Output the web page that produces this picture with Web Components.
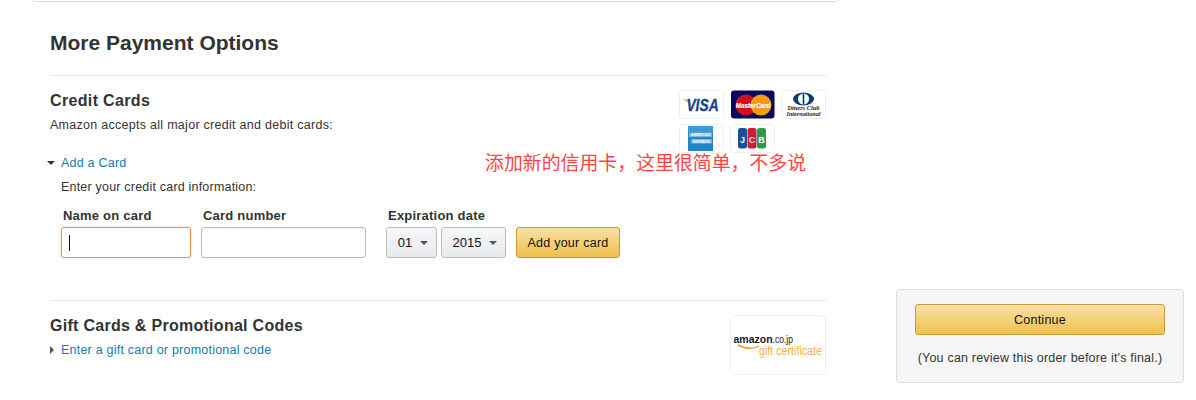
<!DOCTYPE html>
<html>
<head>
<meta charset="utf-8">
<title>More Payment Options</title>
<style>
  html, body { margin: 0; background: #fff; }
  body { font-family: "Liberation Sans", Arial, sans-serif; color: #333; }
</style>
</head>
<body>

<payment-page>
  <payment-options>
    <h-title slot="title">More Payment Options</h-title>

    <pay-section slot="sections" name="Credit Cards" note="Amazon accepts all major credit and debit cards:">
      <card-logos slot="aside"></card-logos>
      <add-card-form></add-card-form>
    </pay-section>

    <pay-section slot="sections" name="Gift Cards &amp; Promotional Codes" compact>
      <gift-logo slot="aside"></gift-logo>
      <toggle-link slot="under">Enter a gift card or promotional code</toggle-link>
    </pay-section>
  </payment-options>

  <order-box>(You can review this order before it's final.)</order-box>
</payment-page>

<script>
function makeEl(name, html) {
  customElements.define(name, class extends HTMLElement {
    constructor() {
      super();
      this.attachShadow({ mode: "open" });
      this.shadowRoot.innerHTML = html;
    }
  });
}

makeEl("payment-page", `
  <style>
    :host { display: flex; width: 1196px; height: 400px; padding-left: 33px; box-sizing: border-box; overflow: hidden; }
  </style>
  <slot></slot>
`);

makeEl("payment-options", `
  <style>
    :host { display: block; width: 805px; flex: none; }
    .stub { height: 1px; border: 1px solid #ddd; border-top: 0; border-radius: 0 0 4px 4px; }
    .body { padding: 0 12px 0 17px; }
    .head { padding-top: 28px; height: 45px; }
  </style>
  <div class="stub"></div>
  <div class="body">
    <div class="head"><slot name="title"></slot></div>
    <slot name="sections"></slot>
  </div>
`);

makeEl("h-title", `
  <style>
    :host { display: block; font: bold 21px/26px "Liberation Sans", Arial, sans-serif; color: #333; }
  </style>
  <slot></slot>
`);

customElements.define("pay-section", class extends HTMLElement {
  constructor() {
    super();
    this.attachShadow({ mode: "open" });
    const note = this.getAttribute("note");
    this.shadowRoot.innerHTML = `
      <style>
        :host { display: block; border-top: 1px solid #e7e7e7; }
        :host([compact]) { margin-top: 42px; }
        .top { display: flex; justify-content: space-between; padding-top: 14px; }
        h3 { margin: 1px 0 0; font: bold 16px/20px "Liberation Sans", Arial, sans-serif; color: #333; letter-spacing: .35px; }
        :host([compact]) h3 { letter-spacing: .28px; }
        p { margin: 6px 0 0; font-size: 12.5px; line-height: 16px; color: #333; letter-spacing: .28px; }
        ::slotted([slot="under"]) { margin-top: 6px; }
      </style>
      <div class="top">
        <div>
          <h3>${this.getAttribute("name")}</h3>
          ${note ? `<p>${note}</p>` : ""}
          <slot name="under"></slot>
        </div>
        <slot name="aside"></slot>
      </div>
      <slot></slot>
    `;
  }
});

makeEl("card-logos", `
  <style>
    :host { display: flex; flex-wrap: wrap; width: 147px; gap: 5px 6px; align-content: flex-start; }
    .c { width: 45px; height: 29px; display: block; }
    text { font-family: "Liberation Sans", Arial, sans-serif; }
    .serif { font-family: "Liberation Serif", serif; }
  </style>
  <svg class="c" viewBox="0 0 45 29">
    <rect x=".5" y=".5" width="44" height="28" rx="3" fill="#fff" stroke="#eee"/>
    <path d="M3 9.5 L9 9.5 L12 15 Q9 11 3 9.5Z" fill="#f0a830"/>
    <text transform="translate(23.5 20.7) scale(1 1.25)" text-anchor="middle" font-size="13.8" font-weight="bold" font-style="italic" fill="#17458f" stroke="#17458f" stroke-width=".3">VISA</text>
  </svg>
  <svg class="c" viewBox="0 0 45 29">
    <rect x="1" y=".5" width="43.5" height="28" rx="3" fill="#05095f"/>
    <circle cx="16" cy="15" r="10.5" fill="#d01020"/>
    <circle cx="31" cy="15" r="10.5" fill="#f59a12"/>
    <text x="23" y="17.5" text-anchor="middle" font-size="6.3" font-weight="bold" font-style="italic" fill="#fff" stroke="#fff" stroke-width=".15">MasterCard</text>
  </svg>
  <svg class="c" viewBox="0 0 45 29">
    <rect x=".5" y=".5" width="44" height="28" rx="3" fill="#fff" stroke="#eee"/>
    <ellipse cx="22.5" cy="9" rx="10.5" ry="6.5" fill="#0a3a78"/>
    <circle cx="22.5" cy="9" r="5.6" fill="#fff"/>
    <rect x="21.7" y="3.4" width="1.6" height="11.2" fill="#0a3a78"/>
    <text class="serif" x="22.5" y="20" text-anchor="middle" font-size="6.4" font-style="italic" font-weight="bold" fill="#222">Diners Club</text>
    <text class="serif" x="22.5" y="26" text-anchor="middle" font-size="6.2" font-style="italic" font-weight="bold" fill="#222">International</text>
  </svg>
  <svg class="c" viewBox="0 0 45 29">
    <rect x=".5" y=".5" width="44" height="28" rx="3" fill="#fff" stroke="#eee"/>
    <rect x="9" y="2" width="25" height="25" fill="#2186c8"/>
    <rect x="9" y="2" width="25" height="6" fill="#3a9ad8"/>
    <rect x="10" y="8.5" width="23" height="4.5" fill="#7db8e0"/>
    <rect x="12" y="15" width="21" height="4.5" fill="#7db8e0"/>
    <text x="21.5" y="12.3" text-anchor="middle" font-size="3.5" font-weight="bold" fill="#fff">AMERICAN</text>
    <text x="22.5" y="18.8" text-anchor="middle" font-size="3.5" font-weight="bold" fill="#fff">EXPRESS</text>
  </svg>
  <svg class="c" viewBox="0 0 45 29">
    <rect x=".5" y=".5" width="44" height="28" rx="3" fill="#fff" stroke="#eee"/>
    <rect x="8" y="4" width="9" height="20.5" rx="2.5" fill="#1a4f9c"/>
    <rect x="17.5" y="4" width="9" height="20.5" rx="2.5" fill="#c8203a"/>
    <rect x="27" y="4" width="9" height="20.5" rx="2.5" fill="#2f9a44"/>
    <text x="12.5" y="18.5" text-anchor="middle" font-size="9" font-weight="bold" fill="#fff">J</text>
    <text x="22" y="18.5" text-anchor="middle" font-size="9" font-weight="bold" fill="#f4d6da">C</text>
    <text x="31.5" y="18.5" text-anchor="middle" font-size="9" font-weight="bold" fill="#fff">B</text>
  </svg>
`);

makeEl("gift-logo", `
  <style>
    :host { display: block; width: 96px; height: 60px; flex: none; }
    svg { display: block; }
    text { font-family: "Liberation Sans", Arial, sans-serif; }
  </style>
  <svg width="96" height="60" viewBox="0 0 96 60">
    <rect x=".5" y=".5" width="95" height="59" rx="5" fill="#fff" stroke="#eee"/>
    <text x="3.5" y="27.5" font-size="10.5" font-weight="bold" fill="#1a1a1a">amazon</text>
    <text transform="translate(42.5 27.5) scale(1 1.3)" font-size="8.6" fill="#1a1a1a">.co.jp</text>
    <path d="M8 30 Q20 36 29 31" fill="none" stroke="#f29a1f" stroke-width="1.4"/>
    <text transform="translate(29 39.5) scale(1 1.15)" font-size="10.7" fill="#fbb040">gift certificate</text>
  </svg>
`);

makeEl("toggle-link", `
  <style>
    :host { display: flex; align-items: center; font-size: 12.5px; line-height: 16px; color: #0f7cb5; letter-spacing: .22px; }
    i { width: 0; height: 0; flex: none; }
    :host(:not([open])) i { border-left: 4px solid #555; border-top: 4px solid transparent; border-bottom: 4px solid transparent; margin-right: 7px; }
    :host([open]) i { border-top: 4px solid #333; border-left: 4px solid transparent; border-right: 4px solid transparent; margin-left: -3px; margin-right: 6px; }
  </style>
  <i></i><slot></slot>
`);

makeEl("text-field", `
  <style>
    :host { display: block; box-sizing: border-box; height: 31px; border: 1px solid #bbb; border-radius: 3px; background: #fff; padding: 7px; box-shadow: inset 0 1px 1px rgba(0,0,0,.05); }
    :host([focused]) { border-color: #e8954a; box-shadow: 0 0 2px rgba(228,121,17,.4); }
    b { display: none; width: 1px; height: 16px; background: #111; }
    :host([focused]) b { display: block; }
  </style>
  <b></b>
`);

makeEl("drop-select", `
  <style>
    :host { display: flex; box-sizing: border-box; height: 31px; padding-left: 2px; align-items: center; justify-content: center; gap: 8px; border: 1px solid #bbb; border-radius: 3px; background: linear-gradient(#f7f8fa, #e7e9ec); font-size: 13px; color: #111; }
    span { margin-left: 1px; }
    i { width: 0; height: 0; border-top: 4px solid #555; border-left: 4px solid transparent; border-right: 4px solid transparent; }
  </style>
  <span><slot></slot></span><i></i>
`);

makeEl("gold-button", `
  <style>
    :host { display: flex; box-sizing: border-box; height: 31px; align-items: center; justify-content: center; border: 1px solid #c59b3a; border-radius: 3px; background: linear-gradient(#f7dfa5, #f0c14b); font-size: 12.5px; color: #111; letter-spacing: .25px; }
  </style>
  <slot></slot>
`);

makeEl("add-card-form", `
  <style>
    :host { display: block; position: relative; }
    toggle-link { margin-top: 2px; }
    .note { margin: 8px 0 0 11px; font-size: 12.5px; line-height: 16px; letter-spacing: .2px; color: #333; }
    .row { display: flex; margin: 13px 0 0 11px; }
    .f { display: flex; flex-direction: column; }
    .f label { font: bold 13px/16px "Liberation Sans", Arial, sans-serif; color: #333; padding-left: 2px; margin-bottom: 3px; letter-spacing: .22px; }
    .pair { display: flex; gap: 4px; }
    .name { width: 130px; margin-right: 10px; }
    .num { width: 165px; margin-right: 20px; }
    .date { margin-right: 10px; }
    .m { width: 51px; }
    .y { width: 65px; }
    .add { width: 104px; }
    .btn { justify-content: flex-end; }
    .memo { position: absolute; left: 435px; top: -5px; font: 18.9px/24px "Noto Sans CJK SC", sans-serif; color: #f44; white-space: nowrap; }
  </style>
  <toggle-link open>Add a Card</toggle-link>
  <div class="memo">添加新的信用卡，这里很简单，不多说</div>
  <div class="note">Enter your credit card information:</div>
  <div class="row">
    <div class="f name"><label>Name on card</label><text-field focused></text-field></div>
    <div class="f num"><label>Card number</label><text-field></text-field></div>
    <div class="f date"><label>Expiration date</label>
      <div class="pair"><drop-select class="m">01</drop-select><drop-select class="y">2015</drop-select></div>
    </div>
    <div class="f btn"><gold-button class="add">Add your card</gold-button></div>
  </div>
`);

makeEl("order-box", `
  <style>
    :host { display: block; flex: none; box-sizing: border-box; width: 288px; height: 94px; margin: 289px 0 0 58px; padding: 14px 18px 0; background: #f6f6f6; border: 1px solid #ddd; border-radius: 4px; text-align: center; }
    gold-button { width: 250px; }
    p { margin: 15px -10px 0; font-size: 12.5px; line-height: 16px; color: #333; letter-spacing: .2px; white-space: nowrap; }
  </style>
  <gold-button>Continue</gold-button>
  <p><slot></slot></p>
`);
</script>
</body>
</html>
